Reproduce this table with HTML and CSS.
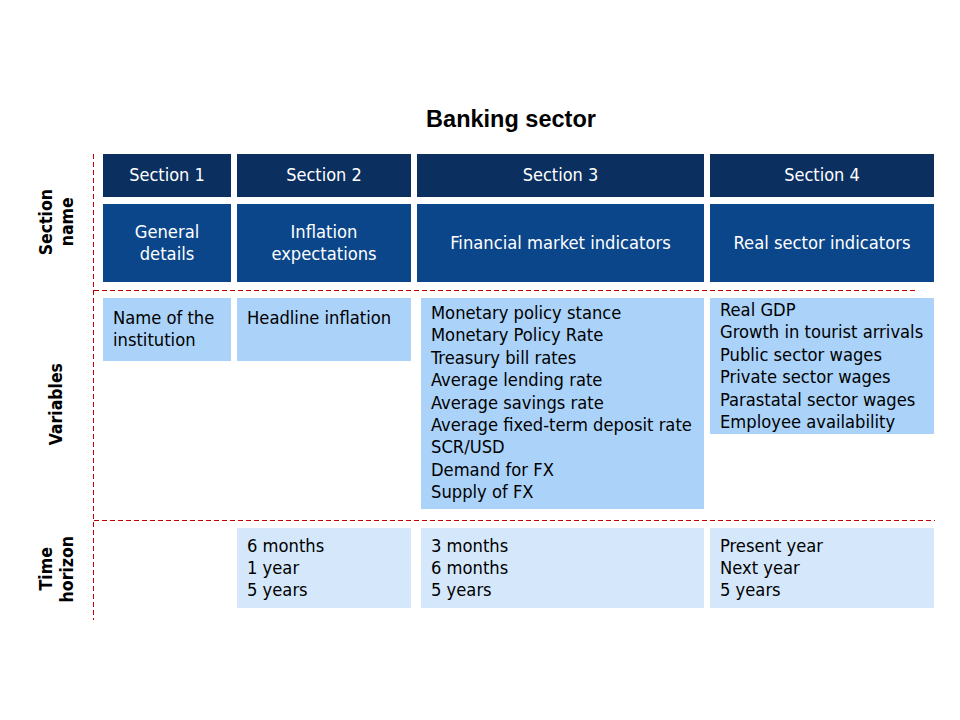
FILE: index.html
```html
<!DOCTYPE html>
<html>
<head>
<meta charset="utf-8">
<link rel="stylesheet" href="styles.css">
</head>
<body>
<div class="slide">
  <h1 class="title">Banking sector</h1>
  <div class="board">
    <div class="labels">
      <div class="label label-a"><span>Section<br>name</span></div>
      <div class="label label-b"><span>Variables</span></div>
      <div class="label label-c"><span>Time<br>horizon</span></div>
    </div>
    <div class="content">
      <div class="band band-a">
        <div class="row">
          <div class="box head">Section 1</div>
          <div class="box head">Section 2</div>
          <div class="box head">Section 3</div>
          <div class="box head">Section 4</div>
        </div>
        <div class="row row-names">
          <div class="box name">General<br>details</div>
          <div class="box name">Inflation<br>expectations</div>
          <div class="box name">Financial market indicators</div>
          <div class="box name">Real sector indicators</div>
        </div>
      </div>
      <div class="sep sep-short"></div>
      <div class="band band-b">
        <div class="row row-top">
          <div class="box var var-min">Name of the<br>institution</div>
          <div class="box var var-min">Headline inflation</div>
          <div class="box var var-tall shift">Monetary policy stance<br>Monetary Policy Rate<br>Treasury bill rates<br>Average lending rate<br>Average savings rate<br>Average fixed-term deposit rate<br>SCR/USD<br>Demand for FX<br>Supply of FX</div>
          <div class="box var var-short">Real GDP<br>Growth in tourist arrivals<br>Public sector wages<br>Private sector wages<br>Parastatal sector wages<br>Employee availability</div>
        </div>
      </div>
      <div class="sep"></div>
      <div class="band band-c">
        <div class="row row-top">
          <div class="empty"></div>
          <div class="box time">6 months<br>1 year<br>5 years</div>
          <div class="box time shift">3 months<br>6 months<br>5 years</div>
          <div class="box time">Present year<br>Next year<br>5 years</div>
        </div>
      </div>
    </div>
  </div>
</div>
</body>
</html>
```

FILE: styles.css
```css
html, body {
  margin: 0;
  padding: 0;
  background: #ffffff;
}

body {
  width: 960px;
  height: 720px;
  overflow: hidden;
  font-family: "DejaVu Sans Condensed", "DejaVu Sans", sans-serif;
  font-stretch: semi-condensed;
}

.slide {
  padding-top: 104px;
}

.title {
  margin: 0;
  padding-left: 62px;
  height: 50px;
  text-align: center;
  font-family: "Liberation Sans", Arial, sans-serif;
  font-stretch: normal;
  font-weight: bold;
  font-size: 23.5px;
  line-height: 30px;
  color: #000;
}

.board {
  display: flex;
  padding-left: 20px;
}

.labels {
  width: 73px;
  display: flex;
  flex-direction: column;
}

.label {
  display: flex;
  align-items: center;
  justify-content: center;
  font-weight: bold;
  font-size: 17.5px;
  line-height: 21px;
  color: #000;
}

.label span {
  writing-mode: vertical-rl;
  transform: rotate(180deg);
  text-align: center;
}

.label-a { height: 136px; }
.label-b { height: 229px; }
.label-c { height: 100px; }

.content {
  width: 841px;
  padding-left: 1px;
  background: repeating-linear-gradient(to bottom, #c00000 0 5px, transparent 5px 8px) left top / 1px 100% no-repeat;
}

.band {
  padding-left: 9px;
}

.band-a {
  padding-bottom: 8px;
}

.band-b {
  padding-top: 7px;
  padding-bottom: 11px;
}

.band-c {
  padding-top: 7px;
  padding-bottom: 12px;
}

.row {
  display: grid;
  grid-template-columns: 128px 174px 287px 224px;
  column-gap: 6px;
}

.row-names {
  margin-top: 7px;
}

.row-top {
  align-items: start;
}

.sep {
  height: 1px;
  background: repeating-linear-gradient(to right, #c00000 0 5px, transparent 5px 8px);
}

.sep-short {
  margin-right: 18px;
}

.box {
  color: #000;
  font-size: 18.2px;
  line-height: 22.4px;
}

.head {
  height: 43px;
  background: #0b2f5f;
  color: #fff;
  display: flex;
  align-items: center;
  justify-content: center;
  font-size: 18px;
}

.name {
  height: 78px;
  background: #0b468a;
  color: #fff;
  display: flex;
  align-items: center;
  justify-content: center;
  text-align: center;
  font-size: 18.2px;
  line-height: 22px;
}

.var {
  background: #abd3f9;
  padding: 3px 10px;
}

.var-min {
  box-sizing: border-box;
  min-height: 63px;
  padding-top: 9px;
  padding-bottom: 0;
}

.var-tall {
  padding-top: 4px;
  padding-bottom: 5px;
}

.var-short {
  padding-top: 1px;
  padding-bottom: 1px;
}

.time {
  background: #d5e8fb;
  padding: 7px 10px 0 10px;
  height: 80px;
  box-sizing: border-box;
  line-height: 22px;
}

.shift {
  margin-left: 4px;
}
```
